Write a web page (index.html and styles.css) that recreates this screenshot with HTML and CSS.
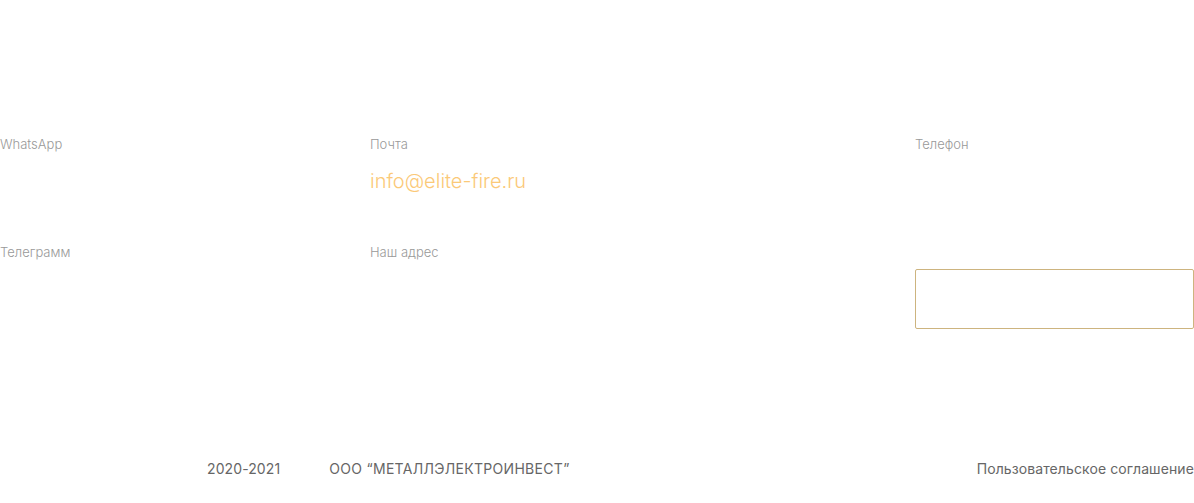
FILE: index.html
```html
<!DOCTYPE html>
<html lang="ru">
<head>
<meta charset="utf-8">
<link rel="stylesheet" href="styles.css">
</head>
<body>
<section class="contacts">
  <div class="col">
    <div class="item">
      <div class="label">WhatsApp</div>
    </div>
    <div class="item">
      <div class="label">Телеграмм</div>
    </div>
  </div>
  <div class="col">
    <div class="item">
      <div class="label">Почта</div>
      <a class="email" href="#">info@elite-fire.ru</a>
    </div>
    <div class="item">
      <div class="label">Наш адрес</div>
    </div>
  </div>
  <div class="col">
    <div class="item">
      <div class="label">Телефон</div>
    </div>
    <div class="box"></div>
  </div>
</section>
<footer class="footer">
  <div class="footer-left">
    <span>2020-2021</span>
    <span class="company">ООО “МЕТАЛЛЭЛЕКТРОИНВЕСТ”</span>
  </div>
  <a class="footer-link" href="#">Пользовательское соглашение</a>
</footer>
</body>
</html>
```
FILE: styles.css
```css
html, body {
  margin: 0;
  padding: 0;
  background: #fff;
}
body {
  width: 1194px;
  height: 503px;
  font-family: Inter, "Noto Sans", sans-serif;
  overflow: hidden;
}
.contacts {
  display: grid;
  grid-template-columns: 370px 545px 279px;
  padding-top: 136px;
  height: 300px;
  box-sizing: border-box;
}
.col {
  display: flex;
  flex-direction: column;
}
.item {
  height: 108px;
}
.label {
  font-size: 13px;
  font-weight: 300;
  color: #999;
  line-height: 16px;
}
.email {
  display: block;
  margin-top: 17px;
  font-size: 20px;
  font-weight: 300;
  color: #fbc978;
  text-decoration: none;
  line-height: 24px;
}
.box {
  margin-top: 25px;
  height: 60px;
  border: 1px solid #cdb47f;
  border-radius: 2px;
  box-sizing: border-box;
  width: 279px;
}
.footer {
  display: flex;
  align-items: center;
  padding-top: 161px;
  padding-left: 207px;
  font-size: 14px;
  line-height: 16px;
  color: #666;
  letter-spacing: 0.1px;
}
.footer-left {
  display: flex;
  gap: 49px;
}
.company {
  letter-spacing: 0.3px;
}
.footer-link {
  margin-left: auto;
  color: #666;
  text-decoration: none;
}
```
